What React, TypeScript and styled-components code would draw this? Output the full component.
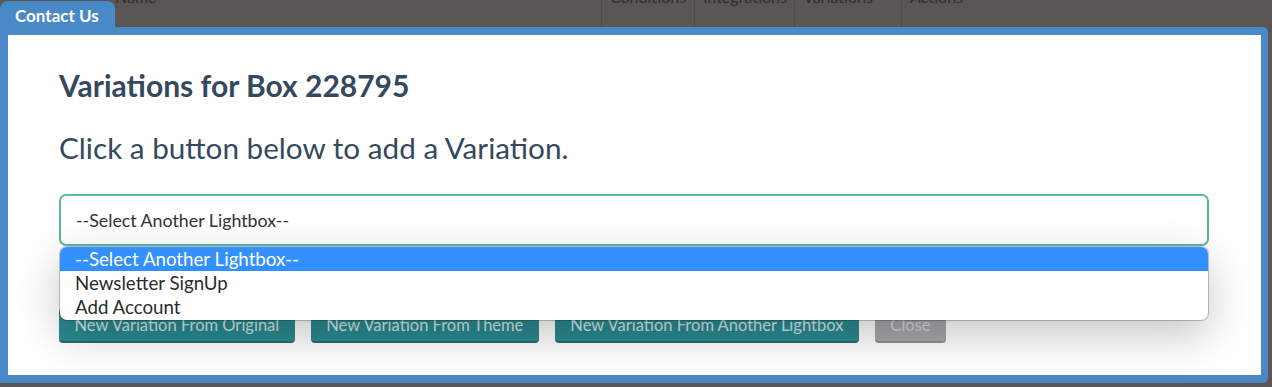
import React from 'react';
import styled, { createGlobalStyle } from 'styled-components';

const GlobalStyle = createGlobalStyle`
    html, body {
        margin: 0;
        padding: 0;
    }
    body {
        font-family: Lato, 'Liberation Sans', sans-serif;
        background: #5a5655;
    }
`;

const Page = styled.div`
    position: relative;
    width: 1272px;
    height: 387px;
    overflow: hidden;
    background: #5a5655;
`;

// table header of the page behind the modal, mostly scrolled out of view
const TableHead = styled.div`
    display: flex;
    height: 40px;
    margin-top: -12px;
    color: #2f2c2b;
    font-size: 16px;
    line-height: 18px;
`;

const HeadCell = styled.div<{ $width: number; $divider?: boolean }>`
    width: ${(p) => p.$width}px;
    flex-shrink: 0;
    box-sizing: border-box;
    padding-left: ${(p) => (p.$divider ? 8 : 0)}px;
    border-left: ${(p) => (p.$divider ? '1px solid #4d4948' : 'none')};
`;

const ModalLayer = styled.div`
    position: absolute;
    top: 1px;
    left: 0;
    width: 1268px;
`;

const Tab = styled.div`
    display: inline-block;
    height: 27px;
    width: 115px;
    padding: 0 0 0 15px;
    box-sizing: border-box;
    background: #4a89c8;
    border-radius: 8px 8px 0 0;
    color: #ffffff;
    font-weight: 700;
    font-size: 17px;
    line-height: 29px;
    white-space: nowrap;
`;

const ModalBox = styled.div`
    background: #ffffff;
    border: 8px solid #4a89c8;
    border-right-width: 7px;
    border-radius: 0 5px 5px 0;
    padding: 32px 51px 32px 51px;
    box-sizing: border-box;
    height: 356px;
    margin-top: -1px;
`;

const Heading = styled.h2`
    margin: 0;
    font-size: 30px;
    line-height: 36px;
    font-weight: 700;
    color: #34495e;
`;

const Lead = styled.p`
    margin: 27px 0 0 0;
    font-size: 29.7px;
    line-height: 36px;
    font-weight: 400;
    color: #34495e;
`;

const SelectWrap = styled.div`
    position: relative;
    margin-top: 28px;
    width: 1150px;
`;

const SelectBox = styled.div`
    height: 52px;
    box-sizing: border-box;
    border: 2px solid #5db5a0;
    border-radius: 7px;
    padding-left: 15px;
    display: flex;
    align-items: center;
    font-size: 17.8px;
    color: #333333;
`;

const Popup = styled.div`
    position: absolute;
    top: calc(100% + 1px);
    left: 1px;
    right: 1px;
    padding-bottom: 1px;
    background: #ffffff;
    border-radius: 7px;
    overflow: hidden;
    box-shadow: 0 0 0 1px rgba(0, 0, 0, 0.22), 0 14px 44px rgba(0, 0, 0, 0.24);
    z-index: 2;
`;

const Option = styled.div<{ $active?: boolean }>`
    height: 24px;
    line-height: 24px;
    padding-left: 15px;
    font-size: 18.7px;
    color: ${(p) => (p.$active ? '#ffffff' : '#2b2b2b')};
    background: ${(p) => (p.$active ? '#3390ff' : 'transparent')};
`;

const ButtonRow = styled.div`
    display: flex;
    gap: 16px;
    margin-top: 63px;
`;

const Button = styled.button<{ $muted?: boolean }>`
    height: 34px;
    box-sizing: border-box;
    padding: 0 15.5px;
    border: none;
    border-bottom: 2px solid ${(p) => (p.$muted ? '#8d9093' : '#1f6f74')};
    border-radius: 4px;
    background: ${(p) => (p.$muted ? '#a5a8ab' : '#2a8a90')};
    color: ${(p) => (p.$muted ? '#d4d7da' : '#cfe6e7')};
    font-family: Lato, 'Liberation Sans', sans-serif;
    font-size: 16.5px;
    line-height: 33px;
    white-space: nowrap;
`;

const columns = [
    { label: '', width: 115 },
    { label: 'Name', width: 486 },
    { label: 'Conditions', width: 93, divider: true },
    { label: 'Integrations', width: 100, divider: true },
    { label: 'Variations', width: 107, divider: true },
    { label: 'Actions', width: 200, divider: true },
];

const options = ['--Select Another Lightbox--', 'Newsletter SignUp', 'Add Account'];

const App = () => {
    return (
        <Page>
            <GlobalStyle />
            <TableHead>
                {columns.map((c) => (
                    <HeadCell key={c.label} $width={c.width} $divider={c.divider}>
                        {c.label}
                    </HeadCell>
                ))}
            </TableHead>
            <ModalLayer>
                <Tab>Contact Us</Tab>
                <ModalBox>
                    <Heading>Variations for Box 228795</Heading>
                    <Lead>Click a button below to add a Variation.</Lead>
                    <SelectWrap>
                        <SelectBox>--Select Another Lightbox--</SelectBox>
                        <Popup>
                            {options.map((o, i) => (
                                <Option key={o} $active={i === 0}>
                                    {o}
                                </Option>
                            ))}
                        </Popup>
                    </SelectWrap>
                    <ButtonRow>
                        <Button>New Variation From Original</Button>
                        <Button>New Variation From Theme</Button>
                        <Button>New Variation From Another Lightbox</Button>
                        <Button $muted>Close</Button>
                    </ButtonRow>
                </ModalBox>
            </ModalLayer>
        </Page>
    );
};

export default App;
